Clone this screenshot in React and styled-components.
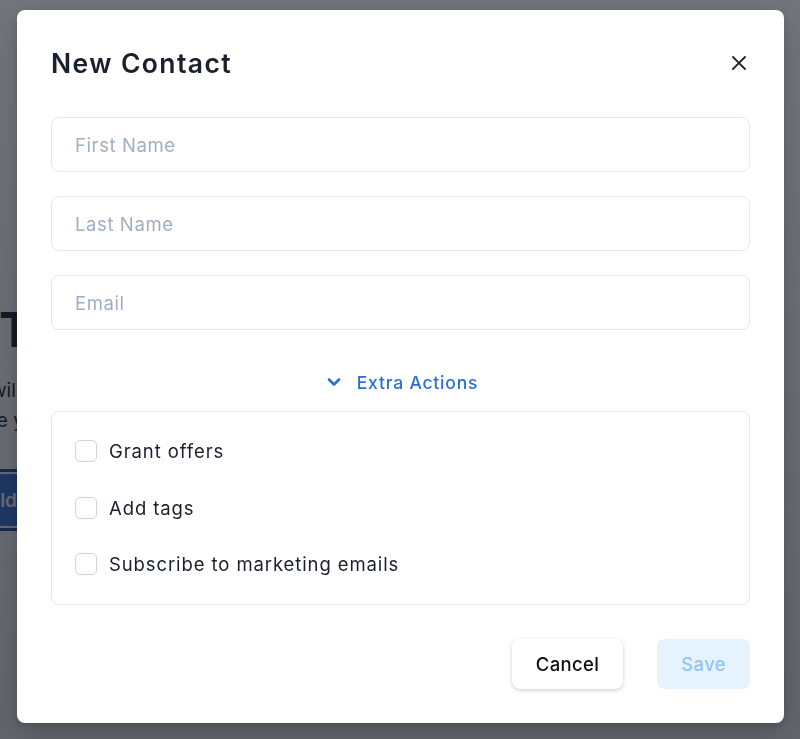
import React, { useState } from 'react'
import styled, { createGlobalStyle } from 'styled-components'

const GlobalStyle = createGlobalStyle`
  html, body {
    margin: 0;
    padding: 0;
    height: 100%;
    overflow: hidden;
    background: #ffffff;
    font-family: Inter, "Noto Sans", "Liberation Sans", sans-serif;
    -webkit-font-smoothing: antialiased;
  }
  * { box-sizing: border-box; }
`

// page behind the dialog
const Page = styled.div`
  height: 100vh;
  overflow: hidden;
  background: #ffffff;
`

const Hero = styled.div`
  display: flex;
  flex-direction: column;
  align-items: flex-start;
  padding-top: 298px;
  margin-left: -30px;
  width: 700px;
`

const HeroTitle = styled.h1`
  margin: 0 0 0 29px;
  font-size: 48px;
  line-height: 64px;
  font-weight: 700;
  color: #1a202c;
  white-space: nowrap;
`

const HeroText = styled.p`
  margin: ${(p) => (p.$first ? 14 : 0)}px 0 0 ${(p) => p.$indent}px;
  font-size: 19px;
  line-height: 30px;
  color: #1a202c;
  white-space: nowrap;
`

const HeroButton = styled.button`
  margin: 36px 0 0 -25px;
  height: 56px;
  padding: 0 24px;
  border: 2px solid #ffffff;
  border-radius: 4px;
  background: #3070d8;
  color: #ffffff;
  font-family: inherit;
  font-size: 19px;
  font-weight: 600;
  box-shadow: 0 0 0 3px #1e48a0;
`

const Overlay = styled.div`
  position: fixed;
  inset: 0;
  display: flex;
  justify-content: center;
  align-items: flex-start;
  padding-top: 10px;
  background: linear-gradient(rgba(20, 26, 36, 0.6), rgba(20, 26, 36, 0.67));
`

const Modal = styled.div`
  width: 767px;
  margin-left: 1px;
  background: #ffffff;
  border-radius: 8px;
  box-shadow: 0 10px 30px rgba(0, 0, 0, 0.18), 0 2px 6px rgba(0, 0, 0, 0.12);
  padding: 33px 34px 34px;
  display: flex;
  flex-direction: column;
`

const Header = styled.div`
  display: flex;
  align-items: center;
  justify-content: space-between;
  height: 40px;
`

const Title = styled.h2`
  margin: 0;
  font-size: 26.5px;
  font-weight: 600;
  color: #1a202c;
  letter-spacing: 1.4px;
`

const CloseButton = styled.button`
  width: 32px;
  height: 32px;
  margin-right: -5px;
  border: none;
  background: transparent;
  display: flex;
  align-items: center;
  justify-content: center;
  cursor: pointer;
  color: #1a202c;
  padding: 0;
`

const Fields = styled.div`
  display: flex;
  flex-direction: column;
  gap: 24px;
  margin-top: 34px;
`

const Input = styled.input`
  height: 55px;
  width: 100%;
  padding: 0 23px;
  border: 1px solid #e2e8f0;
  border-radius: 8px;
  outline: none;
  font-family: inherit;
  font-size: 18.5px;
  letter-spacing: 0.6px;
  color: #1a202c;
  &::placeholder {
    color: #a0aec0;
  }
`

const Toggle = styled.button`
  align-self: center;
  display: flex;
  align-items: center;
  gap: 16px;
  margin: 40px 0 17px 4px;
  height: 24px;
  border: none;
  background: transparent;
  padding: 0;
  font-family: inherit;
  font-size: 17.5px;
  font-weight: 500;
  color: #2b6fd6;
  cursor: pointer;
  letter-spacing: 0.8px;
`

const Panel = styled.div`
  display: flex;
  flex-direction: column;
  gap: 24.5px;
  padding: 23px 23px 24px;
  border: 1px solid #e2e8f0;
  border-radius: 8px;
`

const Row = styled.label`
  display: flex;
  align-items: center;
  gap: 12px;
  height: 32px;
  font-size: 18.5px;
  color: #1a202c;
  letter-spacing: 0.9px;
  cursor: pointer;
`

const Box = styled.span`
  width: 22px;
  height: 22px;
  border: 1.5px solid #cbd5e0;
  border-radius: 5px;
  background: ${(p) => (p.$checked ? '#2b6fd6' : '#ffffff')};
  flex-shrink: 0;
`

const Footer = styled.div`
  display: flex;
  justify-content: flex-end;
  gap: 34px;
  margin-top: 34px;
`

const Button = styled.button`
  height: 50px;
  padding: 0 24px;
  border: none;
  border-radius: 8px;
  font-family: inherit;
  font-size: 18.5px;
  font-weight: 500;
  cursor: pointer;
  background: ${(p) => (p.$primary ? '#e6f2fd' : '#ffffff')};
  color: ${(p) => (p.$primary ? '#90c4f2' : '#111111')};
  box-shadow: ${(p) =>
    p.$primary ? 'none' : '0 1px 3px rgba(0,0,0,0.14), 0 2px 6px rgba(0,0,0,0.08)'};
  letter-spacing: 0.35px;
`

const options = ['Grant offers', 'Add tags', 'Subscribe to marketing emails']

const App = () => {
  const [checked, setChecked] = useState({})

  return (
    <>
      <GlobalStyle />
      <Page>
        <Hero>
          <HeroTitle>Track every contact</HeroTitle>
          <HeroText $first $indent={21}>will keep your contacts in one place</HeroText>
          <HeroText $indent={20}>re your team in the loop</HeroText>
          <HeroButton>Build</HeroButton>
        </Hero>
      </Page>
      <Overlay>
        <Modal>
          <Header>
            <Title>New Contact</Title>
            <CloseButton aria-label="Close">
              <svg width="16" height="16" viewBox="0 0 16 16" fill="none">
                <path d="M2 2L14 14M14 2L2 14" stroke="currentColor" strokeWidth="1.8" strokeLinecap="round" />
              </svg>
            </CloseButton>
          </Header>
          <Fields>
            <Input placeholder="First Name" />
            <Input placeholder="Last Name" />
            <Input placeholder="Email" />
          </Fields>
          <Toggle>
            <svg width="14" height="10" viewBox="0 0 14 10" fill="none">
              <path d="M2 2.5L7 7.5L12 2.5" stroke="currentColor" strokeWidth="2.6" strokeLinecap="round" strokeLinejoin="round" />
            </svg>
            Extra Actions
          </Toggle>
          <Panel>
            {options.map((o) => (
              <Row key={o} onClick={() => setChecked({ ...checked, [o]: !checked[o] })}>
                <Box $checked={!!checked[o]} />
                {o}
              </Row>
            ))}
          </Panel>
          <Footer>
            <Button>Cancel</Button>
            <Button $primary>Save</Button>
          </Footer>
        </Modal>
      </Overlay>
    </>
  )
}

export default App
